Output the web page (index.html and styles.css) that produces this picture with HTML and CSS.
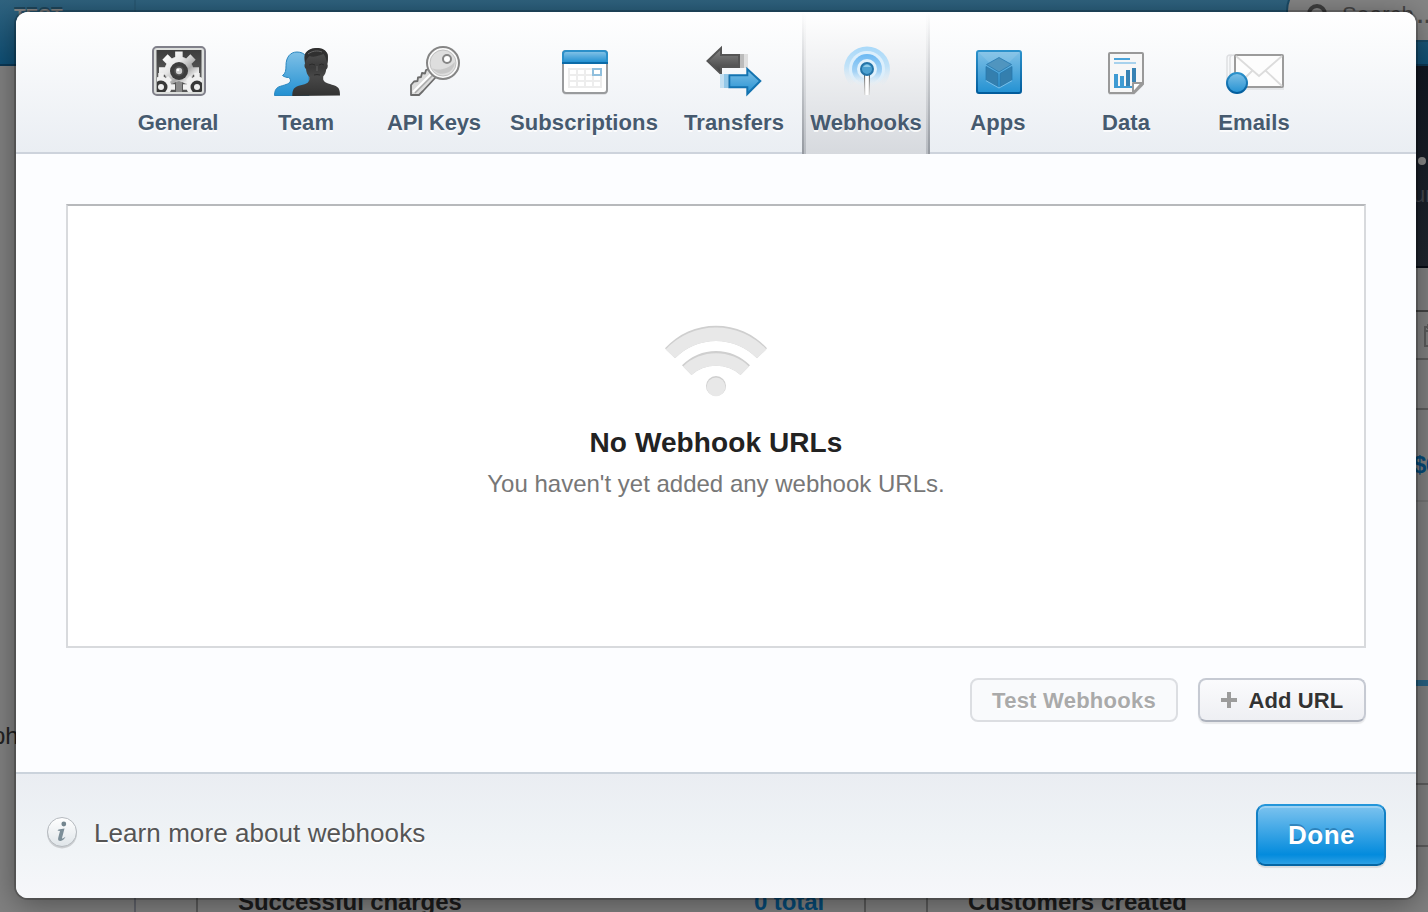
FILE: index.html
```html
<!DOCTYPE html>
<html lang="en">
<head>
<meta charset="utf-8">
<title>Account settings</title>
<link rel="stylesheet" href="styles.css">
</head>
<body>
<div class="dashboard">
  <header class="topbar">
    <div class="mode">TEST</div>
    <div class="search">
      <svg width="24" height="24" viewBox="0 0 24 24" fill="none" stroke="#3e3e3e" stroke-width="4"><circle cx="10" cy="10" r="8"/><path d="M16 16l6 6"/></svg>
      <span class="search-text">Search</span><span class="search-dots">...</span>
    </div>
  </header>
  <div class="columns">
    <aside class="sidebar"><span class="side-item">ph</span></aside>
    <main class="main">
      <section class="hero"><span class="hero-dot"></span><span class="hero-note">ur</span></section>
      <div class="row row-title"></div>
      <div class="row row-tools"><svg width="20" height="24" viewBox="0 0 20 24" fill="none" stroke="#5c5c5c" stroke-width="2"><path d="M2 3h17v19H2zM2 7h17M5 0v5"/></svg></div>
      <div class="row row-blank"></div>
      <div class="row row-amount">$0</div>
      <div class="row row-chart"></div>
      <div class="row row-a"></div>
      <div class="row row-b"></div>
      <div class="cards">
        <section class="card"><b>Successful charges</b><b class="total">0 total</b></section>
        <section class="card"><b class="created">Customers created</b></section>
      </div>
    </main>
  </div>
</div>

<div class="modal">
  <nav class="tabs">
    <a class="tab">
      <svg class="icon" viewBox="0 0 72 60">
        <defs>
          <linearGradient id="dark" x2="0" y2="1"><stop stop-color="#3d3d3d"/><stop offset="1" stop-color="#6a6a6a"/></linearGradient>
          <linearGradient id="metal" x2="1" y2="1"><stop stop-color="#fff"/><stop offset=".45" stop-color="#e2e2e2"/><stop offset=".6" stop-color="#aaa"/><stop offset="1" stop-color="#f4f4f4"/></linearGradient>
          <linearGradient id="gear" gradientUnits="userSpaceOnUse" x1="22" y1="12" x2="52" y2="46"><stop stop-color="#fff"/><stop offset=".35" stop-color="#e6e6e6"/><stop offset=".6" stop-color="#a8a8a8"/><stop offset=".8" stop-color="#eee"/></linearGradient>
          <linearGradient id="blue" x2="0" y2="1"><stop stop-color="#7fc0e6"/><stop offset="1" stop-color="#2391d2"/></linearGradient>
          <linearGradient id="blueEdge" x2="0" y2="1"><stop stop-color="#2c92cc"/><stop offset="1" stop-color="#015c9c"/></linearGradient>
          <clipPath id="frame"><rect x="15" y="8" width="45" height="42"/></clipPath>
        </defs>
        <rect x="11" y="5" width="52" height="48" rx="4" fill="#dcdedc" stroke="#80808a" stroke-width="2"/>
        <rect x="14.500" y="8" width="45" height="42" fill="url(#dark)"/>
        <g clip-path="url(#frame)">
          <g fill="url(#gear)" stroke="url(#gear)">
            <path d="M36.900 9.500L37.100 48M17 28.900L57 29.100M23 15l28 28M51 15L23 43" stroke-width="7.500"/>
            <circle cx="37" cy="29" r="14"/>
          </g>
          <path d="M27 51c2-4 3-6 3-9q7-5 14 0c0 3 1 5 3 9z" fill="#565656"/>
          <path d="M34 40h6v11h-6z" fill="#8a8a8a"/>
          <g fill="#f0f0f0" stroke="#f0f0f0">
            <path d="M19 31v20M19 45h14M19 45l9-9M19 45l9 9M55 31v20M55 45H41M55 45l-9-9M55 45l-9 9" stroke-width="5.500"/>
            <circle cx="19" cy="45" r="10"/><circle cx="55" cy="45" r="10"/>
          </g>
          <circle cx="19" cy="45" r="6.500" fill="#383838"/><circle cx="55" cy="45" r="6.500" fill="#383838"/>
          <circle cx="19" cy="45" r="3" fill="#eee"/><circle cx="55" cy="45" r="3" fill="#eee"/>
        </g>
        <circle cx="37" cy="29" r="9" fill="#3d3d3d"/><circle cx="37" cy="29" r="5" fill="#515151"/><circle cx="37" cy="29" r="3.200" fill="#ccc"/><circle cx="36" cy="28" r="1.300" fill="#fff"/>
      </svg>
      <span class="label label-tight">General</span>
    </a>
    <a class="tab">
      <svg class="icon" viewBox="0 0 72 60">
        <defs><linearGradient id="man" x2="0" y2="1"><stop stop-color="#555"/><stop offset=".4" stop-color="#3a3a3a"/><stop offset=".6" stop-color="#484848"/><stop offset="1" stop-color="#323232"/></linearGradient></defs>
        <path d="M4.500 53.500c0-4 1-7 4-8.500 5-2 11-2.500 12-6 0-2-1-3-2-3.500-2 0-4-.5-6-2 3-2 3.500-5 3.500-10 0-8 4-13.500 11-13.500 8 0 12 6 12 14v29.500z" fill="url(#blue)" stroke="#2b87c0"/>
        <path d="M22.300 54c0-5 1-8 4.500-9.500 5-2 11.500-2 12.500-6.500v-3c-2-2-3-5-3.300-8-1.500-1-2-4-1-5.500-1-5-1-8 0-9.500 2-4 7-6 12-6 7 1 11 4 11 9 0 3 0 5-.6 7 .8 2 .2 4.500-1.200 5.500-.3 3-1.300 5-3 7v3c1 4 8 4.500 12.500 6.500 3.500 1.500 4.300 4.500 4.300 9.500z" fill="url(#man)"/>
        <path d="M35.500 21c0-3 2-5 4-7 5 2 11-1 14-2 2 2 2.500 5 3.500 8 1-3 1-8 0-9-2-4-6-5-10-5-6 0-12 3-12 8 0 3 0 5 .5 7z" fill="#303030"/>
        <path d="M39 23q3-2 6 0M49 23q3-2 5 0M44 33q3-1 6 0" fill="none" stroke="#2b2b2b"/>
        <path d="M38 12c4-3 9-4 14-2" fill="none" stroke="#666"/>
        <path d="M47 24v5" stroke="#606060"/>
      </svg>
      <span class="label">Team</span>
    </a>
    <a class="tab">
      <svg class="icon" viewBox="0 0 72 60">
        <path d="M31 27l-3 1-1 3.500-3-.5-1 4-3 .5-.5 3.500-3.500.5L13 43v10h8l2-2 2-2 13-14z" fill="#dcdcdc" stroke="#6c6c6c" stroke-width="1.800" stroke-linejoin="round"/>
        <path d="M15 50l18-18" stroke="#fff" stroke-width="2"/><path d="M17 51l18-18" stroke="#aaa" stroke-width="1.500"/>
        <circle cx="45" cy="21" r="16" fill="#fafafa" stroke="#858585" stroke-width="2"/>
        <circle cx="45" cy="21" r="13" fill="#dedede" stroke="#c2c2c2"/>
        <path d="M34 26c6 3 15 2 23-6a12.500 12.500 0 0 1-23 6z" fill="#bdbdbd" opacity=".7"/>
        <circle cx="49" cy="17" r="4" fill="#fff" stroke="#858585" stroke-width="2"/>
      </svg>
      <span class="label label-tight">API Keys</span>
    </a>
    <a class="tab tab-wide">
      <svg class="icon" viewBox="0 0 72 60">
        <rect x="15" y="10" width="44" height="43" rx="3" fill="#000" opacity=".08"/>
        <rect x="15" y="9" width="44" height="42" rx="3" fill="#fff" stroke="#999b9d" stroke-width="2"/>
        <path d="M14 22V12q0-4 4-4h38q4 0 4 4v10z" fill="#2b8fc9"/><path d="M16 20v-8q0-2 2-2h38q2 0 2 2v8z" fill="url(#blue)"/>
        <path d="M14 21h46" stroke="#0b6ba8" stroke-width="2"/>
        <g fill="none" stroke="#ededed" stroke-width="2"><path d="M21 27h32v18H21zM21 33h32M21 39h32M29 27v18M37 27v18M45 27v18"/></g>
        <rect x="45" y="27" width="8" height="6" fill="#fff" stroke="#90bfdd" stroke-width="2"/>
      </svg>
      <span class="label">Subscriptions</span>
    </a>
    <a class="tab">
      <svg class="icon" viewBox="0 0 72 60">
        <defs><linearGradient id="grey" x2="0" y2="1"><stop stop-color="#888"/><stop offset="1" stop-color="#3c3c3c"/></linearGradient></defs>
        <path d="M42 12h4v14h-4z" fill="#bbb"/><path d="M46 12h4v14h-4z" fill="#dfdfdf"/>
        <path d="M9.500 19L23 6v7h18v12H23v7z" fill="url(#grey)" stroke="#555" stroke-width="2"/>
        <path d="M22 32h4v14h-4z" fill="#c5e0f1"/><path d="M26 32h4v14h-4z" fill="#94c8e8"/>
        <path d="M62.300 39L49.300 27v6.300h-18v12h18V52z" fill="url(#blue)" stroke="#1474b1" stroke-width="2"/>
      </svg>
      <span class="label">Transfers</span>
    </a>
    <a class="tab tab-active">
      <svg class="icon" viewBox="0 0 72 60">
        <defs>
          <linearGradient id="wave" x2="0" y2="1"><stop stop-color="#a9d9f9"/><stop offset=".5" stop-color="#c1e2f8"/><stop offset="1" stop-color="#dcebf5" stop-opacity="0"/></linearGradient>
          <linearGradient id="wave2" x2="0" y2="1"><stop stop-color="#6cb9f3"/><stop offset=".6" stop-color="#a5d3f5"/><stop offset="1" stop-color="#e0edf6" stop-opacity=".2"/></linearGradient>
          <linearGradient id="halo" x2="0" y2="1"><stop stop-color="#dceffc"/><stop offset=".6" stop-color="#dceffc"/><stop offset="1" stop-color="#dceffc" stop-opacity="0"/></linearGradient>
          <linearGradient id="stem" x2="0" y2="1"><stop stop-color="#666"/><stop offset="1" stop-color="#999" stop-opacity=".2"/></linearGradient>
        </defs>
        <path d="M21 44a23 23 0 1 1 32 0l-16-17z" fill="url(#wave)"/>
        <circle cx="37" cy="27" r="18" fill="url(#halo)"/>
        <circle cx="37" cy="27" r="15" fill="url(#wave2)"/>
        <circle cx="37" cy="27" r="10" fill="#e1f1fc"/>
        <path d="M34 33h6v20h-6z" fill="#eee"/><path d="M34 33h1v20h-1zM39 33h1v20h-1z" fill="url(#stem)"/><path d="M36 33h2v20h-2z" fill="#fff"/>
        <circle cx="37" cy="27" r="6" fill="#4da1d1" stroke="#2474a8" stroke-width="2"/><path d="M33 25q4-5 8 0z" fill="#91cce9"/>
      </svg>
      <span class="label">Webhooks</span>
    </a>
    <a class="tab">
      <svg class="icon" viewBox="0 0 72 60">
        <rect x="15" y="9" width="44" height="42" rx="2" fill="url(#blue)" stroke="url(#blueEdge)" stroke-width="2"/>
        <path d="M16 10l21 20L58 10z" fill="#fff" opacity=".1"/>
        <g fill="#347fae" stroke="#2779af" stroke-width=".8"><path d="M37 15.500l12.500 7L37 30l-12.500-7.500z" fill="#5095bf"/><path d="M24 24.500l12 7V45l-12-7z"/><path d="M50 24.500l-12 7V45l12-7z"/></g>
        <path d="M24 38.700l13 7.300 13-7.300" fill="none" stroke="#8bcaf0" stroke-width=".8"/>
      </svg>
      <span class="label">Apps</span>
    </a>
    <a class="tab">
      <svg class="icon" viewBox="0 0 72 60">
        <path d="M19 12h34v32l-9 9H19z" fill="#000" opacity=".08"/>
        <path d="M20 11h32q1 0 1 1v30l-9 9H20q-1 0-1-1V12q0-1 1-1z" fill="#f7f7f7" stroke="#999" stroke-width="2"/>
        <path d="M24 17h16" stroke="#4aa3d9" stroke-width="2"/><path d="M24 21h22" stroke="#a8d2ed" stroke-width="2"/>
        <path d="M24 32h4v12h2V34h4v10h2V28h4v16h2v2H24z" fill="#3f9bd3"/><path d="M36 28h4v16h-4zM42 26h4v14h-4z" fill="#3882b3"/>
        <path d="M43 51V41h9z" fill="#fff" stroke="#999" stroke-width="2" stroke-linejoin="round"/>
      </svg>
      <span class="label">Data</span>
    </a>
    <a class="tab">
      <svg class="icon" viewBox="0 0 72 60">
        <path d="M14 13h-2q-3 0-3 3v26M16 13q-4 0-4 3v26" fill="none" stroke="#dedfe2" stroke-width="1.500"/>
        <rect x="16" y="14" width="50" height="34" fill="#000" opacity=".06"/>
        <rect x="17" y="13" width="48" height="32" rx="1" fill="#fdfdfd" stroke="#9b9b9b" stroke-width="2"/>
        <path d="M18 14l23 20 23-20M34 29L19 44M48 29l16 15" fill="none" stroke="#dcdcdc" stroke-width="1.800"/>
        <circle cx="19" cy="41" r="10" fill="url(#blue)" stroke="url(#blueEdge)" stroke-width="2"/>
      </svg>
      <span class="label">Emails</span>
    </a>
  </nav>

  <section class="body">
    <div class="list">
      <svg class="wifi" viewBox="0 0 112 80">
        <g fill="#cfcfcf"><path d="M5 28.300a68.800 68.800 0 0 1 102 0l-10 10a57 57 0 0 0-82 0z"/><path d="M22 45.300a47.500 47.500 0 0 1 68 0l-9.500 9.700a37 37 0 0 0-49 0z"/><circle cx="56" cy="66" r="10"/></g>
        <g fill="#e8e8e8"><path d="M5.500 29.500a68.800 68.800 0 0 1 101 0l-9.500 8.800a57 57 0 0 0-82 0z"/><path d="M23 46.500a47.500 47.500 0 0 1 66 0L80.500 55a37 37 0 0 0-49 0z"/><circle cx="56" cy="66.800" r="9.400"/></g>
      </svg>
      <h2 class="empty-title">No Webhook URLs</h2>
      <p class="empty-text">You haven't yet added any webhook URLs.</p>
    </div>
    <div class="actions">
      <button class="btn btn-disabled" disabled>Test Webhooks</button>
      <button class="btn btn-add"><svg width="16" height="16" viewBox="0 0 16 16"><path d="M6 0h4v6h6v4h-6v6H6v-6H0V6h6z" fill="#9c9c9c"/></svg>Add URL</button>
    </div>
  </section>

  <footer class="footer">
    <a class="learn">
      <svg width="34" height="34" viewBox="0 0 34 34">
        <defs><linearGradient id="disc" x2="0" y2="1"><stop stop-color="#fff"/><stop offset="1" stop-color="#dfe5e9"/></linearGradient></defs>
        <circle cx="17" cy="17.500" r="15" fill="#000" opacity=".15"/>
        <circle cx="17" cy="16" r="14.500" fill="url(#disc)" stroke="#b5babf"/>
        <circle cx="18.800" cy="8" r="2.400" fill="#74868f"/>
        <path d="M13.500 13.500l6-1-2.500 9.500q0 1 1.500 0l2-1.200q-2 4-5 4.200-3.200 0-2.200-3.500l1.700-6.500q-.5-.6-2.500-.2z" fill="#7c8e98"/>
      </svg>
      <span class="learn-text">Learn more about webhooks</span>
    </a>
    <button class="done">Done</button>
  </footer>
</div>
</body>
</html>
```
FILE: styles.css
```css
* { box-sizing: border-box; }
body {
  margin: 0;
  width: 1428px;
  height: 912px;
  overflow: hidden;
  font-family: "Liberation Sans", Arial, sans-serif;
  background: #808080;
}
h2, p { margin: 0; }

/* Dimmed dashboard under the dialog */
.dashboard {
  position: absolute;
  inset: 0;
  overflow: hidden;
  display: flex;
  flex-direction: column;
}
.topbar {
  flex: none;
  height: 66px;
  display: flex;
  justify-content: space-between;
  background: linear-gradient(#30637f, #0f4f75);
  border-bottom: 2px solid #0b3855;
}
.mode {
  width: 136px;
  height: 64px;
  padding: 5px 0 0 14px;
  border-right: 2px solid #295a75;
  font-size: 19px;
  line-height: 21px;
  font-weight: bold;
  color: #858585;
  text-shadow: 0 -2px 0 rgba(0, 0, 0, .3);
}
.search {
  display: flex;
  width: 240px;
  height: 62px;
  margin: -20px -98px 0 0;
  padding: 22px 0 0 19px;
  border: 2px solid #1a4a66;
  border-radius: 31px;
  background: #858585;
  color: #454545;
  font-size: 22px;
  line-height: 24px;
}
.search-text { margin: -1px 0 0 11px; letter-spacing: .4px; }
.search-dots { margin: 0 0 0 3px; letter-spacing: 1px; font-weight: bold; }
.columns { flex: 1; display: flex; width: 1600px; min-height: 0; }
.sidebar {
  flex: none;
  width: 136px;
  padding-top: 656px;
  border-right: 2px solid #60626a;
  overflow: hidden;
}
.side-item { display: block; margin-left: -8px; font-size: 24px; line-height: 28px; color: #222; }
.main { flex: 1; }
.hero {
  display: flex;
  flex-direction: column;
  height: 202px;
  padding: 91px 0 0 1282px;
  background: linear-gradient(#111722, #20262f);
  border-bottom: 2px solid #080d16;
}
.hero-dot { width: 8px; height: 8px; border-radius: 4px; background: #888; }
.hero-note { margin: 18px 0 0 -5px; font-size: 22px; line-height: 24px; color: #41464e; }
.row { padding-left: 1277px; border-bottom: 2px solid #5e5e5e; }
.row-title { height: 44px; border-color: #444; }
.row-tools { height: 48px; padding: 12px 0 0 1287px; }
.row-blank { height: 50px; }
.row-amount { height: 92px; padding-top: 41px; border-color: #747474; font-size: 24px; font-weight: bold; letter-spacing: -.5px; color: #054a78; }
.row-chart { height: 184px; border-bottom: 6px solid #286283; }
.row-a { height: 99px; }
.row-b { height: 62px; }
.cards { display: flex; gap: 60px; padding-left: 60px; margin-top: 40px; }
.card {
  flex: none;
  display: flex;
  justify-content: space-between;
  width: 670px;
  height: 40px;
  padding: 1px 40px;
  border: solid #5a5a5a;
  border-width: 0 2px;
  font-size: 24px;
  line-height: 28px;
  letter-spacing: -.1px;
  color: #1c1c1c;
}
.total { color: #064a76; }
.created { letter-spacing: .1px; }

/* Dialog */
.modal {
  position: relative;
  display: flex;
  flex-direction: column;
  width: 1400px;
  height: 886px;
  margin: 12px 14px 14px 16px;
  border-radius: 12px;
  background: #fcfdff;
  box-shadow: 0 0 0 2px rgba(0, 0, 0, .2), 0 5px 30px rgba(0, 0, 0, .4);
}
.tabs {
  flex: none;
  display: flex;
  justify-content: center;
  height: 142px;
  border-bottom: 2px solid #cdd3dc;
  border-radius: 12px 12px 0 0;
  background: linear-gradient(#fff, #eaeef3);
}
.tab {
  display: flex;
  flex-direction: column;
  align-items: center;
  width: 128px;
  height: 142px;
  padding-top: 30px;
}
.tab-wide { width: 172px; }
.tab-active {
  margin: 0 4px;
  background:
    linear-gradient(rgba(90, 96, 105, 0), rgba(90, 96, 105, .52)) left / 2px 100% no-repeat,
    linear-gradient(rgba(90, 96, 105, 0), rgba(90, 96, 105, .25)) 2px 0 / 2px 100% no-repeat,
    linear-gradient(rgba(90, 96, 105, 0), rgba(90, 96, 105, .52)) right / 2px 100% no-repeat,
    linear-gradient(rgba(90, 96, 105, 0), rgba(90, 96, 105, .25)) 124px 0 / 2px 100% no-repeat,
    linear-gradient(#fff, #d6d9de);
}
.icon { width: 72px; height: 60px; }
.label {
  margin-top: 7px;
  font-size: 22px;
  font-weight: bold;
  line-height: 28px;
  letter-spacing: .1px;
  color: #465a6f;
  text-shadow: 0 2px 0 rgba(255, 255, 255, .8);
  white-space: nowrap;
}
.label-tight { letter-spacing: -.2px; }
.body { flex: 1; padding: 50px; }
.list {
  display: flex;
  flex-direction: column;
  align-items: center;
  height: 444px;
  padding-top: 114px;
  border: 2px solid #d8dadd;
  border-top-color: #b7b9bc;
  background: #fff;
}
.wifi { width: 112px; height: 80px; }
.empty-title { margin-top: 27px; font-size: 28px; line-height: 32px; letter-spacing: .1px; color: #222; }
.empty-text { margin-top: 9px; font-size: 24px; line-height: 32px; color: #777; }
.actions { display: flex; justify-content: flex-end; gap: 20px; margin-top: 30px; }
.btn {
  display: flex;
  align-items: center;
  justify-content: center;
  gap: 12px;
  height: 44px;
  padding: 1px 0 0;
  border: 2px solid #c6cad3;
  border-bottom-color: #adb2bd;
  border-radius: 8px;
  background: linear-gradient(#fbfbfd, #eeeff3);
  box-shadow: 0 2px 1px rgba(0, 0, 0, .08);
  font: bold 22px "Liberation Sans", Arial, sans-serif;
  letter-spacing: .1px;
  color: #333;
  text-shadow: 0 2px 0 #fff;
}
.btn svg { margin-top: -1px; }
.btn-add { width: 168px; }
.btn-disabled { width: 208px; letter-spacing: .25px; border-color: #dcdee2; background: #f9fafc; box-shadow: none; color: #aaa; }
.footer {
  flex: none;
  display: flex;
  align-items: center;
  justify-content: space-between;
  height: 126px;
  padding: 0 30px 2px 29px;
  border-top: 2px solid #cbd3dc;
  border-radius: 0 0 12px 12px;
  background: linear-gradient(#eaedf2, #eff3f6 50%, #f6f7fa);
}
.learn { display: flex; align-items: center; gap: 15px; padding-bottom: 4px; }
.learn-text { font-size: 26px; line-height: 32px; letter-spacing: .07px; color: #555; text-shadow: 0 2px 0 #fff; }
.done {
  width: 130px;
  height: 62px;
  padding: 0 0 0 1px;
  border: 2px solid;
  border-color: #2496da #1280c5 #0565a3;
  border-radius: 9px;
  background: linear-gradient(#7cc3ef, #038bdd 84%, #2da0e4);
  box-shadow: inset 0 2px 0 rgba(255, 255, 255, .25), 0 2px 1px rgba(0, 0, 0, .1);
  font: bold 26px "Liberation Sans", Arial, sans-serif;
  letter-spacing: .5px;
  color: #fff;
  text-shadow: 0 -2px 0 rgba(0, 60, 110, .35);
}
```
